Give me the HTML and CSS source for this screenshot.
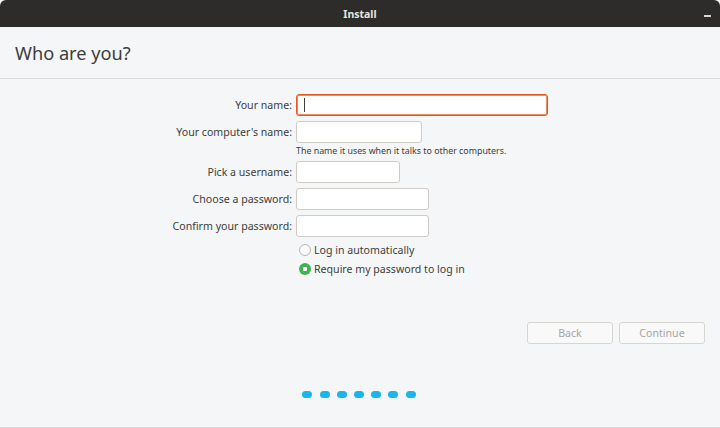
FILE: index.html
```html
<!DOCTYPE html>
<html lang="en">
<head>
  <meta charset="UTF-8" />
  <title>Install</title>
  <link rel="stylesheet" href="styles.css">
</head>
<body>
  <div class="window">
    <header class="titlebar">
      <span class="title">Install</span>
      <span class="minimize"></span>
    </header>

    <div class="page-head">
      <h1>Who are you?</h1>
    </div>

    <div class="content">
      <form class="user-form">
        <label class="label">Your name:</label>
        <div class="field field-wide focused"><span class="caret"></span></div>

        <label class="label">Your computer's name:</label>
        <div class="field field-computer"></div>

        <span></span>
        <p class="hint">The name it uses when it talks to other computers.</p>

        <label class="label">Pick a username:</label>
        <div class="field field-user"></div>

        <label class="label">Choose a password:</label>
        <div class="field field-pass"></div>

        <label class="label">Confirm your password:</label>
        <div class="field field-pass"></div>

        <span></span>
        <div class="radios">
          <div class="radio"><span class="dot"></span>Log in automatically</div>
          <div class="radio"><span class="dot checked"></span>Require my password to log in</div>
        </div>
      </form>

      <div class="actions">
        <button type="button" disabled>Back</button>
        <button type="button" disabled>Continue</button>
      </div>

      <div class="progress">
        <span></span><span></span><span></span><span></span><span></span><span></span><span></span>
      </div>
    </div>
  </div>
</body>
</html>
```

FILE: styles.css
```css
* { margin: 0; padding: 0; box-sizing: border-box; }

body {
  font-family: 'Noto Sans', 'DejaVu Sans', sans-serif;
  background: #f5f6f7;
  width: 720px;
  height: 428px;
  overflow: hidden;
}

.window {
  height: 428px;
  display: flex;
  flex-direction: column;
  border-bottom: 1px solid #dadcdd;
}

.titlebar {
  height: 27px;
  background: #2d2c2b;
  border-radius: 6px 6px 0 0;
  display: flex;
  justify-content: center;
  align-items: center;
  position: relative;
}

.title {
  color: #e6e4df;
  font-size: 10.5px;
  font-weight: bold;
}

.minimize {
  position: absolute;
  right: 9px;
  top: 15px;
  width: 7px;
  height: 2px;
  background: #d8d6d2;
}

.page-head {
  height: 52px;
  padding-left: 15px;
  display: flex;
  align-items: center;
  border-bottom: 1px solid #dcdedf;
}

h1 {
  font-size: 18.2px;
  font-weight: normal;
  color: #3d3d3d;
}

.content {
  flex: 1;
  display: flex;
  flex-direction: column;
  padding-top: 15px;
}

.user-form {
  display: grid;
  grid-template-columns: 292px auto;
  column-gap: 4px;
  row-gap: 5px;
  align-items: center;
  font-size: 10.6px;
  color: #3d3d3d;
}

.label {
  text-align: right;
}

.field {
  height: 22px;
  background: #fff;
  border: 1px solid #cfcbc6;
  border-radius: 3px;
}

.field-wide { width: 252px; }
.field-computer { width: 126px; }
.field-user { width: 104px; }
.field-pass { width: 133px; }

.focused {
  border: 1px solid #e95420;
  box-shadow: inset 0 0 0 1px #f08860;
  padding: 3px 7px;
}

.caret {
  display: block;
  width: 1px;
  height: 14px;
  background: #3d3d3d;
}

.hint {
  font-size: 8.85px;
  margin: -3px 0 -1px;
}

.radios {
  display: flex;
  flex-direction: column;
  gap: 5px;
  padding-left: 3px;
  margin-top: 1px;
}

.radio {
  display: flex;
  align-items: center;
  gap: 3px;
  height: 14px;
}

.dot {
  width: 12px;
  height: 12px;
  border-radius: 50%;
  border: 1px solid #b9b6b2;
  background: #fbfbfb;
}

.dot.checked {
  border: none;
  background: radial-gradient(circle, #fff 0 2px, #3eb34f 2.5px);
}

.actions {
  display: flex;
  justify-content: flex-end;
  gap: 6px;
  padding-right: 15px;
  margin-top: 46px;
}

button {
  width: 86px;
  height: 22px;
  font-family: inherit;
  font-size: 10.6px;
  color: #a5a5a5;
  background: #f9f9f9;
  border: 1px solid #d8d5d1;
  border-radius: 3px;
}

.progress {
  display: flex;
  justify-content: center;
  gap: 7.2px;
  margin-top: 47px;
  padding-right: 2px;
}

.progress span {
  width: 10px;
  height: 7px;
  border-radius: 4px;
  background: #19b6ee;
}
```
